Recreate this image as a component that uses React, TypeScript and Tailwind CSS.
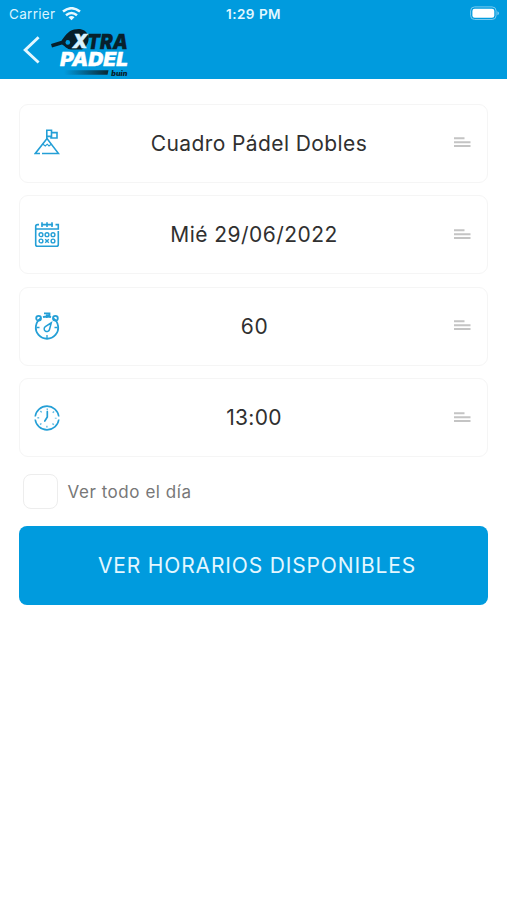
import type { ReactNode } from "react";

const CourtIcon = () => (
  <svg width="26" height="28" viewBox="0 0 26 28" fill="none" stroke="#249fd6" strokeWidth="1.6">
    <path d="M8 24.5H24.5L13 9.5L1.3 24.5H6" />
    <path d="M9 15.2L11.3 17L13.2 15.2L15 17L17.2 15.2" strokeWidth="1.1" />
    <path d="M12.8 10V1.3H17.5V7.4H12.8M17.5 3.6H23V9H17V7.4" />
  </svg>
);

const CalendarIcon = () => (
  <svg width="26" height="28" viewBox="0 0 26 28" fill="none" stroke="#249fd6" strokeWidth="1.6">
    <path d="M5 3.6H3.5Q1.7 3.6 1.7 5.4V23.5Q1.7 25.3 3.5 25.3H22.5Q24.3 25.3 24.3 23.5V10M7.5 3.6H19M21.5 3.6H24.3V8H1.7" />
    <path d="M8 1.3V6M13 1.3V6M18 1.3V6" />
    <g strokeWidth="1.4">
      <circle cx="7" cy="13.7" r="1.9" />
      <circle cx="13" cy="13.7" r="1.9" />
      <circle cx="19" cy="13.7" r="1.9" />
      <circle cx="7" cy="20" r="1.9" />
      <circle cx="19" cy="20" r="1.9" />
      <path d="M11.2 18.2L14.8 21.8M14.8 18.2L11.2 21.8" />
    </g>
  </svg>
);

const StopwatchIcon = () => (
  <svg width="26" height="28" viewBox="0 0 26 28" fill="none" stroke="#249fd6" strokeWidth="1.8">
    <path d="M6.8 6.2A11.2 11.2 0 1 0 19.2 6.2M9 5.2Q13 3.8 17 5.2" />
    <path d="M10 1.3H15.5V3.3H12.8V6" />
    <circle cx="4.6" cy="6.2" r="2.4" />
    <circle cx="21.4" cy="6.2" r="2.4" />
    <path d="M2.5 15.5H5.5M20.5 15.5H23.5M13 23V26" strokeWidth="1.3" />
    <path d="M17.3 10.8L15.5 17.5A2.7 2.7 0 1 1 11.3 14.7Z" strokeWidth="1.5" />
  </svg>
);

const ClockIcon = () => (
  <svg width="26" height="28" viewBox="0 0 26 28" fill="none" stroke="#249fd6" strokeWidth="1.6">
    <path d="M1.2 12.5A11.9 11.9 0 0 1 24.8 12.5M1.2 15.5A11.9 11.9 0 0 0 24.8 15.5" />
    <path d="M13.3 7.5V13L10.8 17" strokeWidth="1.7" strokeLinecap="round" />
    <circle cx="13" cy="14" r="8.7" strokeWidth="1.8" strokeDasharray="1.4 5.433" strokeDashoffset="0.7" opacity="0.75" />
  </svg>
);

const Logo = () => (
  <svg className="absolute left-[51px] top-[26px]" width="80" height="53" viewBox="0 0 80 53">
    <defs>
      <linearGradient id="swoosh">
        <stop offset="0" stopColor="#0a2632" stopOpacity="0" />
        <stop offset="1" stopColor="#0a2632" />
      </linearGradient>
    </defs>
    <path
      fill="#08202b"
      d="M0 18L10.5 14.8C13 11 17 5 23 3.5C30 1.8 35 4 37 9C39 14 36 21 31 23.5H20C16 23.3 14.5 20.5 11 18.5L1 21.5Z"
    />
    <circle cx="16.8" cy="16.4" r="2.3" fill="#009bde" />
    <g fontFamily="Inter, 'Liberation Sans', sans-serif" fontWeight="900" fontStyle="italic">
      <text x="21.5" y="22.3" fontSize="18.5" fill="#d9f3ff" stroke="#d9f3ff" strokeWidth=".4" textLength="15" lengthAdjust="spacingAndGlyphs">X</text>
      <text x="36" y="22.5" fontSize="20.5" fill="#08202b" stroke="#08202b" strokeWidth=".3" textLength="41" lengthAdjust="spacingAndGlyphs">TRA</text>
      <text x="9" y="40.2" fontSize="19" fill="#fff" stroke="#fff" strokeWidth=".3" textLength="68" lengthAdjust="spacingAndGlyphs">PADEL</text>
      <text x="60.3" y="49.6" fontSize="7" fill="#08202b" textLength="16" lengthAdjust="spacingAndGlyphs">buin</text>
    </g>
    <path d="M13 44.3H57.5L56.5 48.7H13Z" fill="url(#swoosh)" />
  </svg>
);

const Handle = () => (
  <svg width="17" height="12" viewBox="0 0 17 12" fill="#c4c4c4">
    <path d="M0 .2H10.5V2.2H0ZM0 4.2H16.5V6.2H0ZM0 8H16.5V10H0Z" />
  </svg>
);

const Field = ({ icon, children }: { icon: ReactNode; children: ReactNode }) => (
  <button className="flex h-[79px] w-full items-center rounded-[9px] border-[1.5px] border-[#f5f5f5] bg-white pl-[14px] pr-4">
    {icon}
    <span className="flex-1 text-center text-[21px] leading-none text-[#303030]">{children}</span>
    <Handle />
  </button>
);

const App = () => {
  return (
    <div className="h-[900px] w-[507px] overflow-hidden bg-white font-['Inter','Liberation_Sans',sans-serif]">
      <header className="relative h-[79px] bg-[#009bde] text-white">
        {/* Status bar */}
        <div className="flex h-[27px] items-center pl-[9px] pr-2">
          <div className="flex w-[160px] items-center gap-[6px] text-[13.5px]">
            <span className="w-[47px] whitespace-nowrap pt-px tracking-[0.3px] text-[#d9f4ff]">Carrier</span>
            <svg width="19" height="14" viewBox="0 0 19 14" fill="none" stroke="#e8f9ff" strokeWidth="2.5">
              <path d="M1 4.6Q9.5-2.2 18 4.6M4 8.2Q9.5 3.7 15 8.2" />
              <path d="M9.5 13.2L6.5 10.2Q9.5 7.7 12.5 10.2Z" fill="#e8f9ff" stroke="none" />
            </svg>
          </div>
          <span className="w-[169px] pt-px text-center text-[13.5px] font-semibold tracking-[0.5px] text-[#e3f7ff]">1:29 PM</span>
          <svg className="ml-auto" width="29" height="15" viewBox="0 0 29 15">
            <rect x=".6" y=".9" width="25.5" height="12.6" rx="4" fill="none" stroke="#79caef" strokeWidth="1" />
            <rect x="2.4" y="2.7" width="21.9" height="9" rx="2.3" fill="#fff" />
            <path d="M27.4 5.2V9.2Q29 8.5 29 7.2Q29 5.9 27.4 5.2Z" fill="#79caef" />
          </svg>
        </div>
        {/* Back */}
        <svg className="ml-[23px] mt-[9px]" width="18" height="28" viewBox="0 0 18 28" fill="none" stroke="#e4f7ff" strokeWidth="2.9">
          <path d="M15.6 1.3L2.2 14L15.6 26.5" />
        </svg>
        <Logo />
      </header>

      <main className="px-[19px] pt-[24.5px]">
        <div className="flex flex-col gap-[12.6px]">
          <Field icon={<CourtIcon />}>
            <span className="ml-[4px] tracking-[0.4px]">Cuadro Pádel Dobles</span>
          </Field>
          <Field icon={<CalendarIcon />}>
            <span className="mr-[6px] tracking-[0.45px]">Mié 29/06/2022</span>
          </Field>
          <Field icon={<StopwatchIcon />}>
            <span className="mr-[5px] tracking-[0.7px]">60</span>
          </Field>
          <Field icon={<ClockIcon />}>
            <span className="mr-[6px] tracking-[0.3px]">13:00</span>
          </Field>
        </div>

        <label className="ml-[3.5px] mt-[17px] flex h-[35px] items-center gap-[10px]">
          <span className="size-[35px] rounded-[8px] border-[1.5px] border-[#ededed]" />
          <span className="pt-px text-[17px] tracking-[0.55px] text-[#777]">Ver todo el día</span>
        </label>

        <button className="mt-[17px] flex h-[79px] w-full items-center justify-center rounded-[8px] bg-[#009bde] pl-[7px] text-[21px] tracking-[0.85px] text-[#e4f7ff]">
          VER HORARIOS DISPONIBLES
        </button>
      </main>
    </div>
  );
};

export default App;
